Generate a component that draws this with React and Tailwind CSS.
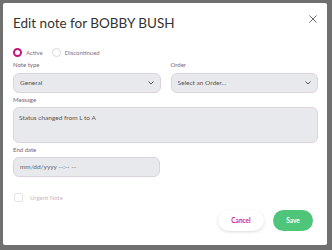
import React, { useState } from 'react';

export default function App() {
  const [status, setStatus] = useState('active');
  const [urgent, setUrgent] = useState(false);

  return (
    <div className="w-[332px] h-[250px] bg-[#707070] pl-[3px] pt-[3px] pr-[5px] pb-[5px] font-['Lato',sans-serif]">
      <div className="w-full h-full bg-white rounded-[2px] pl-[10px] pr-[9px] pt-[11px] flex flex-col">
        <div className="flex items-start justify-between">
          <h1 className="text-[13.5px] leading-[18px] text-[#333]">Edit note for BOBBY BUSH</h1>
          <button className="mt-[1px] mr-[1px] text-[#666]">
            <svg width="8" height="8" viewBox="0 0 10 10" stroke="currentColor" strokeWidth="1.2">
              <path d="M0.5 0.5L9.5 9.5M9.5 0.5L0.5 9.5" />
            </svg>
          </button>
        </div>

        <div className="flex items-center h-[10px] mt-[15px] text-[6px] text-[#8a7080]">
          <label className="flex items-center gap-[4px]" onClick={() => setStatus('active')}>
            <span className={status === 'active' ? 'w-[9px] h-[9px] rounded-full border-[2.5px] border-[#c4157d] bg-white' : 'w-[9px] h-[9px] rounded-full border border-[#d8d8d8] bg-white'} />
            Active
          </label>
          <label className="flex items-center gap-[4px] ml-[9px]" onClick={() => setStatus('disc')}>
            <span className={status === 'disc' ? 'w-[9px] h-[9px] rounded-full border-[2.5px] border-[#c4157d] bg-white' : 'w-[9px] h-[9px] rounded-full border border-[#d8d8d8] bg-white'} />
            Discontinued
          </label>
        </div>

        <div className="grid grid-cols-2 gap-[10px] mt-[4px]">
          <div>
            <div className="text-[6px] leading-[8px] text-[#7d6272] mb-[4px]">Note type</div>
            <div className="h-[20px] bg-[#e8e9ed] border border-[#dcd3dd] rounded-[6px] flex items-center justify-between pl-[6px] pr-[6px] text-[6.5px] text-[#555]">
              <span>General</span>
              <svg width="6" height="4" viewBox="0 0 6 4" fill="none" stroke="#555" strokeWidth="1"><path d="M0.5 0.5L3 3L5.5 0.5" /></svg>
            </div>
          </div>
          <div>
            <div className="text-[6px] leading-[8px] text-[#7d6272] mb-[4px]">Order</div>
            <div className="h-[20px] bg-[#e8e9ed] border border-[#dcd3dd] rounded-[6px] flex items-center justify-between pl-[6px] pr-[6px] text-[6.5px] text-[#555]">
              <span>Select an Order...</span>
              <svg width="6" height="4" viewBox="0 0 6 4" fill="none" stroke="#555" strokeWidth="1"><path d="M0.5 0.5L3 3L5.5 0.5" /></svg>
            </div>
          </div>
        </div>

        <div className="text-[6px] leading-[8px] text-[#7d6272] mt-[3px] mb-[3px]">Message</div>
        <div className="h-[36px] bg-[#e8e9ed] border border-[#dcd3dd] rounded-[6px] px-[5px] pt-[5px] text-[6.5px] text-[#555]">
          Status changed from L to A
        </div>

        <div className="text-[6px] leading-[8px] text-[#7d6272] mt-[3px] mb-[3px]">End date</div>
        <div className="w-[147px] h-[20px] bg-[#e8e9ed] border border-[#dcd3dd] rounded-[6px] flex items-center px-[6px] text-[6.5px] text-[#666]">
          mm/dd/yyyy --:-- --
        </div>

        <label className="flex items-center gap-[7px] mt-[16px] ml-[1px] h-[9px] text-[6px] text-[#c9b8c3]" onClick={() => setUrgent(!urgent)}>
          <span className="w-[9px] h-[9px] rounded-[2px] border border-[#e4e4e4] bg-white" />
          Urgent Note
        </label>

        <div className="flex justify-end gap-[9px] mt-[8px] mr-[5px]">
          <button className="w-[46px] h-[21px] rounded-full bg-white shadow-[0_1px_3px_rgba(0,0,0,0.15)] text-[6.5px] font-bold text-[#d0259a]">Cancel</button>
          <button className="w-[40px] h-[21px] rounded-full bg-[#4fc57a] text-[6.5px] font-bold text-white">Save</button>
        </div>
      </div>
    </div>
  );
}
